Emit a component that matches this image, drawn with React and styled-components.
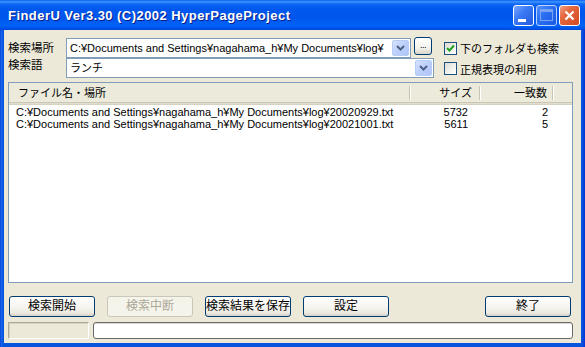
import React from 'react'
import styled, { createGlobalStyle } from 'styled-components';

const GlobalStyle = createGlobalStyle`
    html, body {
        margin: 0;
        padding: 0;
        width: 585px;
        height: 347px;
        overflow: hidden;
        background: #0054E3;
    }
    * { box-sizing: border-box; }
`;

const UI_FONT = `"Liberation Sans", "Noto Sans CJK JP", sans-serif`;

const Window = styled.div`
    width: 585px;
    height: 347px;
    display: flex;
    flex-direction: column;
    background: linear-gradient(to right, #0831D9 0, #166AEE 1px, #0855DD 3px, #0855DD calc(100% - 3px), #0831D9 100%);
    font-family: ${UI_FONT};
    font-size: 12px;
    color: #000;
`;

const TitleBar = styled.div`
    height: 30px;
    flex: none;
    display: flex;
    align-items: center;
    padding: 0 5px 0 8px;
    background: linear-gradient(to bottom,
        #0A5FEF 0%, #3D95FF 6%, #0D64F4 14%, #0058EE 30%,
        #0056EC 60%, #0062F8 85%, #0057ED 93%, #0044D4 100%);
`;

const Title = styled.div`
    color: #fff;
    font-family: "Liberation Sans", sans-serif;
    font-weight: bold;
    font-size: 13px;
    letter-spacing: 0.45px;
    text-shadow: 1px 1px 0 #0A1E8A;
    flex: 1;
`;

const CaptionGroup = styled.div`
    display: flex;
    gap: 2px;
`;

const CaptionButton = styled.div`
    width: 21px;
    height: 21px;
    border: 1px solid #fff;
    border-radius: 3px;
    display: flex;
    align-items: center;
    justify-content: center;
    position: relative;
    background: ${p => p.kind === 'close'
        ? 'linear-gradient(135deg, #F0A088 0%, #E4683F 35%, #D24A22 100%)'
        : 'linear-gradient(135deg, #7BA5FF 0%, #3C7BF5 40%, #2457DC 100%)'};
    opacity: ${p => p.disabled ? 0.72 : 1};
`;

const MinBar = styled.div`
    position: absolute;
    left: 4px;
    top: 13px;
    width: 8px;
    height: 3px;
    background: #fff;
`;

const MaxBox = styled.div`
    width: 13px;
    height: 12px;
    border: 1px solid #A9C2F6;
    border-top-width: 3px;
`;

const Client = styled.div`
    flex: 1;
    margin: 0 4px 4px;
    background: #ECE9D8;
    padding: 8px 8px 4px 4px;
    display: flex;
    flex-direction: column;
`;

const Form = styled.div`
    display: grid;
    grid-template-columns: 58px 345px 23px 1fr;
    grid-template-rows: 20px 20px;
`;

const Label = styled.div`
    line-height: 14px;
    font-size: 11.5px;
    align-self: ${p => p.top ? 'start' : 'center'};
    white-space: nowrap;
`;

const Combo = styled.div`
    grid-column: ${p => p.span ? '2 / span 2' : '2'};
    height: 20px;
    border: 1px solid #7F9DB9;
    background: #fff;
    display: flex;
    align-items: center;
    padding: 1px;
`;

const ComboText = styled.div`
    flex: 1;
    padding-left: 2px;
    white-space: nowrap;
    overflow: hidden;
    line-height: 16px;
    font-size: 11px;
`;

const DropButton = styled.div`
    width: 17px;
    height: 16px;
    flex: none;
    border: 1px solid #B6CBF6;
    border-radius: 2px;
    background: linear-gradient(135deg, #D6E3FE 0%, #BBCFFA 50%, #AFC6F8 100%);
    display: flex;
    align-items: center;
    justify-content: center;
`;

const BrowseButton = styled.div`
    margin: -1px 0 0 3px;
    width: 18px;
    height: 18px;
    border: 1px solid #003C74;
    border-radius: 3px;
    background: linear-gradient(to bottom, #FFFFFF 0%, #F4F3EE 60%, #D9D6CA 100%);
    font-size: 9px;
    line-height: 14px;
    text-align: center;
    letter-spacing: -0.5px;
`;

const CheckRow = styled.label`
    display: flex;
    align-items: center;
    gap: 3px;
    padding-left: 10px;
    white-space: nowrap;
    font-size: 11px;
    margin-top: ${p => p.offset || 0}px;
`;

const CheckBox = styled.span`
    width: 13px;
    height: 13px;
    flex: none;
    border: 1px solid #1C5180;
    background: linear-gradient(135deg, #DCDCD7 0%, #F2F2EE 60%, #FFFFFF 100%);
    display: flex;
    align-items: center;
    justify-content: center;
`;

const List = styled.div`
    flex: 1;
    margin-top: 4px;
    border: 1px solid #7F9DB9;
    background: #fff;
    overflow: hidden;
`;

const COLS = '401px 70px 73px 1fr';

const Header = styled.div`
    display: grid;
    grid-template-columns: ${COLS};
    height: 22px;
    background: #EBEADB;
    border-bottom: 1px solid #D6D2C2;
    box-shadow: inset 0 -1px 0 #E2DECD, inset 0 -2px 0 #CBC7B8;
    font-size: 11px;
`;

const HeaderCell = styled.div`
    position: relative;
    line-height: 20px;
    padding: 0 ${p => p.pr || 0}px 0 ${p => p.pl || 0}px;
    text-align: ${p => p.right ? 'right' : 'left'};
    white-space: nowrap;
    &::after {
        content: ${p => p.sep ? "''" : 'none'};
        position: absolute;
        right: 0;
        top: 3px;
        bottom: 4px;
        width: 1px;
        background: #C7C5B2;
        box-shadow: 1px 0 0 #fff;
    }
`;

const Rows = styled.div`
    padding-top: 1px;
`;

const Row = styled.div`
    display: grid;
    grid-template-columns: ${COLS};
    height: 12px;
    line-height: 12px;
    font-size: 11px;
`;

const Cell = styled.div`
    padding: 0 ${p => p.pr || 0}px 0 ${p => p.pl || 0}px;
    text-align: ${p => p.right ? 'right' : 'left'};
    white-space: nowrap;
`;

const ButtonRow = styled.div`
    display: flex;
    gap: 12px;
    margin-top: 13px;
    padding: 0 2px 0 1px;
`;

const Button = styled.div`
    width: 86px;
    height: 21px;
    border: 1px solid ${p => p.disabled ? '#C9C7BA' : '#003C74'};
    border-radius: 3px;
    background: ${p => p.disabled
        ? '#F5F4EA'
        : 'linear-gradient(to bottom, #FFFFFF 0%, #F5F4F0 55%, #EBE8DE 85%, #D6D0C5 100%)'};
    color: ${p => p.disabled ? '#ACA899' : '#000'};
    line-height: 19px;
    text-align: center;
    white-space: nowrap;
    margin-left: ${p => p.push ? 'auto' : '0'};
`;

const StatusRow = styled.div`
    display: flex;
    gap: 4px;
    margin-top: 5px;
    height: 17px;
`;

const StatusPanel = styled.div`
    width: 81px;
    border: 1px solid;
    border-color: #ACA899 #fff #fff #ACA899;
    box-shadow: inset 1px 1px 0 #D6D2C2;
`;

const Progress = styled.div`
    flex: 1;
    border: 1px solid #686868;
    border-radius: 3px;
    background: #fff;
    box-shadow: inset 0 1px 0 #D8D8D8;
`;

const Chevron = () => (
    <svg width="9" height="6" viewBox="0 0 9 6">
        <path d="M1 1 L4.5 4.5 L8 1" fill="none" stroke="#4D6185" strokeWidth="2" />
    </svg>
);

const Check = () => (
    <svg width="9" height="9" viewBox="0 0 9 9">
        <path d="M1 4 L3.5 6.5 L8 1.5" fill="none" stroke="#21A121" strokeWidth="2" />
    </svg>
);

const CloseX = () => (
    <svg width="11" height="11" viewBox="0 0 11 11">
        <path d="M1.5 1.5 L9.5 9.5 M9.5 1.5 L1.5 9.5" stroke="#fff" strokeWidth="2.2" />
    </svg>
);

const results = [
    { path: 'C:¥Documents and Settings¥nagahama_h¥My Documents¥log¥20020929.txt', size: 5732, hits: 2 },
    { path: 'C:¥Documents and Settings¥nagahama_h¥My Documents¥log¥20021001.txt', size: 5611, hits: 5 },
];

export default function App() {
    return (
        <>
            <GlobalStyle />
            <Window>
                <TitleBar>
                    <Title>FinderU Ver3.30 (C)2002 HyperPageProject</Title>
                    <CaptionGroup>
                        <CaptionButton><MinBar /></CaptionButton>
                        <CaptionButton disabled><MaxBox /></CaptionButton>
                        <CaptionButton kind="close"><CloseX /></CaptionButton>
                    </CaptionGroup>
                </TitleBar>
                <Client>
                    <Form>
                        <Label>検索場所</Label>
                        <Combo>
                            <ComboText>C:¥Documents and Settings¥nagahama_h¥My Documents¥log¥</ComboText>
                            <DropButton><Chevron /></DropButton>
                        </Combo>
                        <BrowseButton>...</BrowseButton>
                        <CheckRow>
                            <CheckBox><Check /></CheckBox>下のフォルダも検索
                        </CheckRow>
                        <Label top>検索語</Label>
                        <Combo span>
                            <ComboText>ランチ</ComboText>
                            <DropButton><Chevron /></DropButton>
                        </Combo>
                        <CheckRow offset={1}>
                            <CheckBox />正規表現の利用
                        </CheckRow>
                    </Form>
                    <List>
                        <Header>
                            <HeaderCell pl={9} sep>ファイル名・場所</HeaderCell>
                            <HeaderCell right pr={8} sep>サイズ</HeaderCell>
                            <HeaderCell right pr={6} sep>一致数</HeaderCell>
                            <HeaderCell />
                        </Header>
                        <Rows>
                            {results.map(r => (
                                <Row key={r.path}>
                                    <Cell pl={7}>{r.path}</Cell>
                                    <Cell right pr={12}>{r.size}</Cell>
                                    <Cell right pr={5}>{r.hits}</Cell>
                                    <Cell />
                                </Row>
                            ))}
                        </Rows>
                    </List>
                    <ButtonRow>
                        <Button>検索開始</Button>
                        <Button disabled>検索中断</Button>
                        <Button>検索結果を保存</Button>
                        <Button>設定</Button>
                        <Button push>終了</Button>
                    </ButtonRow>
                    <StatusRow>
                        <StatusPanel />
                        <Progress />
                    </StatusRow>
                </Client>
            </Window>
        </>
    )
}
